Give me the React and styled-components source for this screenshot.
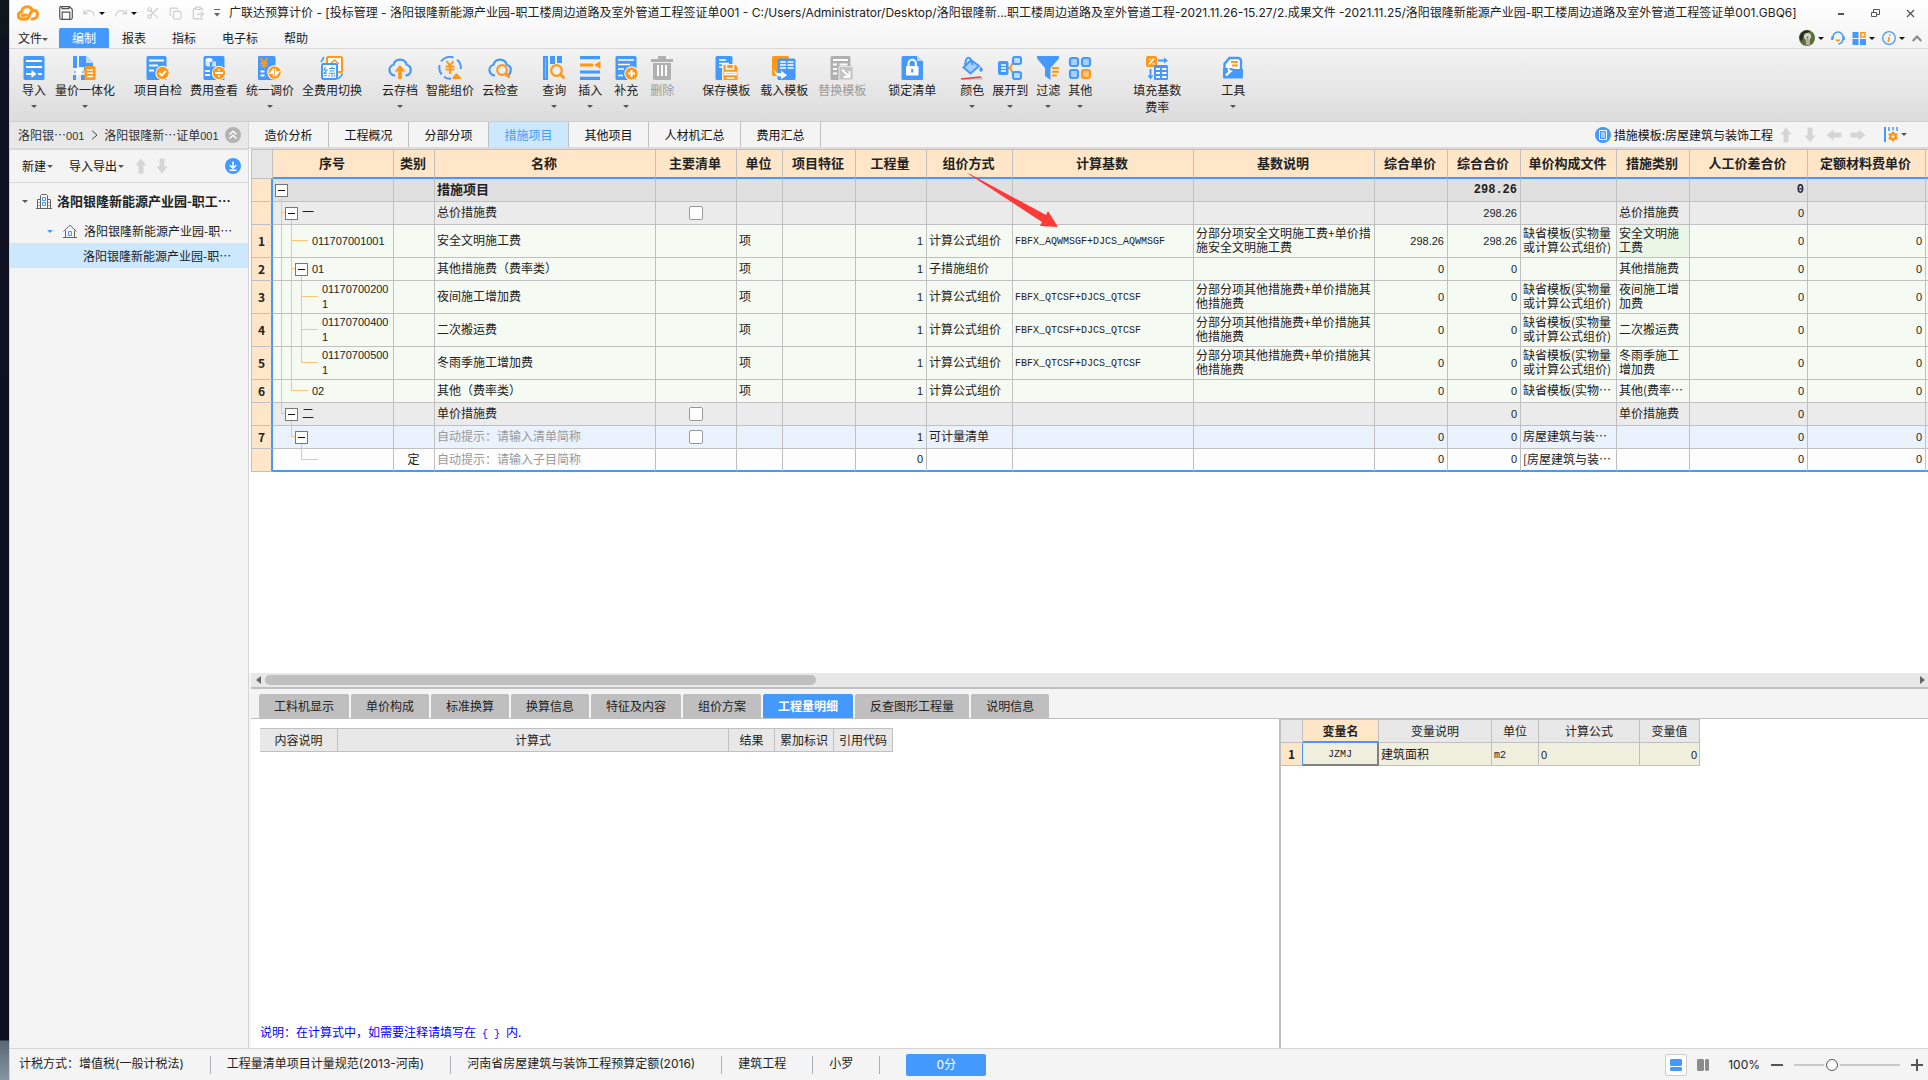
import React from 'react';
import styled, { createGlobalStyle } from 'styled-components'
import { Undo, Redo, Scissors, Copy, ClipboardPaste } from 'lucide-react'

const BLUE = '#4499ff';
const ORANGE = '#ff9718';
const LINE = '#c0c0c0';

const GlobalStyle = createGlobalStyle`
* {
    box-sizing: border-box;
}
body {
    margin: 0;
    background: #0d101c;
    color: #222;
    font-family: "Inter", "Noto Sans CJK SC", sans-serif;
    font-size: 12px;
    line-height: 16px;
}
button, input {
    font: inherit;
    color: inherit;
    margin: 0;
    padding: 0;
}
button {
    background: none;
    border: 0;
    white-space: nowrap;
}
svg {
    display: block;
    flex: none;
}
`

const Desktop = styled.div`
display: flex;
min-height: 100vh;
padding-left: 9px;
background: linear-gradient(#10181a, #0f1122 60px, #0e1020 1040px, #5a6672 1041px, #8795a4) left / 9px 100% no-repeat;
overflow: hidden;
`

const Window = styled.div`
flex: 1;
min-width: 0;
display: flex;
flex-direction: column;
background: #f4f4f4;
border-left: 1px solid #d5d5d5;
`

const Top = styled.header`
background: linear-gradient(#ffffff, #f3f3f3);
border-bottom: 1px solid #d8d8d8;
`

const TitleBar = styled.div`
display: flex;
align-items: center;
height: 28px;
padding: 0 0 2px 7px;
`

const Quick = styled.div`
display: flex;
align-items: center;
gap: 9px;
margin-left: 20px;
`

const IconButton = styled.button`
display: flex;
align-items: center;
gap: 3px;
color: ${props => props.$color || '#444'};
`

const Caret = styled.span`
display: block;
flex: none;
border: solid transparent;
border-width: 3px 3px 0;
border-top-color: ${props => props.$color || '#555'};
`

const Title = styled.div`
flex: 1;
min-width: 0;
overflow: hidden;
white-space: nowrap;
`

const WindowButton = styled.button`
display: flex;
align-items: center;
justify-content: center;
width: 35px;
height: 20px;
`

const MenuBar = styled.nav`
display: flex;
height: 20px;
`

const MenuItem = styled.button`
display: flex;
align-items: center;
padding: 2px ${props => props.$first ? '11px 0 8px' : '13px 0'};
border-radius: 2px 2px 0 0;
background: ${props => props.$active ? BLUE : 'none'};
color: ${props => props.$active ? 'white' : '#222'};
`

const Account = styled.div`
display: flex;
align-items: center;
gap: 7px;
margin-left: auto;
padding-right: 6px;
`

const Ribbon = styled.div`
display: flex;
height: 73px;
padding: 7px 0 0 12px;
background: linear-gradient(#f3f3f3, #dcdcdc);
border-bottom: 1px solid #cecece;
overflow: hidden;
`

const ToolGroup = styled.div`
display: flex;
align-items: flex-start;
gap: ${props => props.$gap}px;
margin-left: ${props => props.$lead}px;
`

const Tool = styled.button`
display: flex;
flex-direction: column;
align-items: center;
gap: 2px;
color: ${props => props.$off ? '#9a9a9a' : '#222'};
line-height: 17px;
white-space: pre;

${Caret} {
    margin-top: 4px;
}
`

const Body = styled.div`
flex: 1;
display: flex;
min-height: 0;
`

const Side = styled.aside`
flex: none;
width: 239px;
border-right: 1px solid #d5d5d5;
font-family: "Noto Sans CJK SC", sans-serif;
`

const Crumbs = styled.div`
display: flex;
align-items: center;
justify-content: space-between;
height: 28px;
padding: 0 7px 0 8px;
background: #e8e8e8;
border-bottom: 2px solid #d8d8d8;
`

const Crumb = styled.a`
color: #333;
text-decoration: none;
`

const SideTools = styled.div`
display: flex;
align-items: center;
height: 33px;
padding: 0 7px 0 12px;
gap: 5px;
border-bottom: 1px solid #d8d8d8;
`

const SideMenu = styled.button`
display: flex;
align-items: center;
gap: 1px;
margin-right: ${props => props.$space}px;
color: #111;
`

const Spacer = styled.div`
flex: 1;
`

const TreeItem = styled.button`
display: flex;
align-items: center;
width: 100%;
height: ${props => props.$height}px;
padding-left: ${props => props.$indent}px;
gap: ${props => props.$bold ? 8 : 10}px;
background: ${props => props.$active ? '#cce8ff' : 'none'};
font-size: ${props => props.$bold ? 13 : 12}px;
font-weight: ${props => props.$bold ? 700 : 400};
`

const TreeLabel = styled.span`
margin-left: -3px;
`

const Main = styled.main`
flex: 1;
min-width: 0;
display: flex;
flex-direction: column;
font-family: "Noto Sans CJK SC", sans-serif;
`

const PageTabs = styled.div`
display: flex;
height: 27px;
border-bottom: 2px solid #dcdcdc;
`

const PageTab = styled.button`
width: ${props => props.$wide ? 92 : 80}px;
border-right: 1px solid ${LINE};
background: ${props => props.$active ? '#cce8ff' : 'none'};
color: ${props => props.$active ? BLUE : '#111'};
`

const Template = styled.div`
display: flex;
align-items: center;
gap: 3px;
margin-left: auto;
padding-right: 21px;
color: #111;
`

const Arrows = styled.div`
display: flex;
gap: 8px;
padding: 0 15px 0 2px;
`

const GridPane = styled.section`
position: relative;
flex: 1;
padding-left: 2px;
background: white;
overflow: hidden;
`

const Sheet = styled.table`
table-layout: fixed;
width: 1677px;
border-collapse: separate;
border-spacing: 0;
border-top: 1px solid ${LINE};
border-left: 1px solid ${LINE};
line-height: 14px;
`

const HeadCell = styled.th`
height: 29px;
padding: 0 2px 2px 0;
background: ${props => props.$corner ? '#e6e6e6' : '#ffe6c8'};
border-right: 1px solid ${LINE};
border-bottom: ${props => props.$corner ? `1px solid ${LINE}` : `2px solid ${BLUE}`};
font-size: 13px;
font-weight: 700;
white-space: nowrap;
`

const RowHead = styled.th`
padding: 0;
background: #ffe6c8;
border-right: 2px solid ${BLUE};
border-bottom: 1px solid ${LINE};
font-weight: 700;
`

const tones = {
    total: '#e0e0e0',
    group: '#ebebeb',
    item: '#f5faf3',
    active: '#eaf2fd',
    blank: '#fdfdfd'
}

const Row = styled.tr`
height: ${props => props.$tall ? 33 : 23}px;
background: ${props => tones[props.$tone]};

&:last-child td {
    border-bottom: 2px solid ${BLUE};
}
`

const Cell = styled.td`
padding: 0 3px 2px 2px;
border-right: 1px solid ${LINE};
border-bottom: 1px solid ${LINE};
background: ${props => props.$marked ? '#ebf7e6' : 'none'};
color: ${props => props.$hint ? '#999' : '#222'};
text-align: ${props => props.$align || 'left'};
white-space: pre;
overflow: hidden;
`

const FlushCell = styled(Cell)`
padding: 0;
`

const Digits = styled.span`
font-family: "Liberation Sans", sans-serif;
font-size: 11px;
`

const Total = styled.span`
font-family: ${props => props.$num ? '"Liberation Mono", monospace' : 'inherit'};
font-size: ${props => props.$num ? 12 : 13}px;
font-weight: 700;
`

const Code = styled.span`
font-family: "Liberation Mono", monospace;
font-size: 10px;
`

const Branch = styled.div`
position: relative;
display: flex;
align-items: center;
height: ${props => props.$height}px;
padding-left: ${props => props.$indent}px;
gap: 4px;

svg {
    position: absolute;
    left: 0;
    top: 0;
}
`

const BranchLabel = styled.span`
padding-bottom: 2px;
`

const Toggle = styled.button`
position: relative;
display: flex;
align-items: center;
justify-content: center;
width: 13px;
height: 13px;
background: white;
border: 1px solid #777;

&::before {
    content: '';
    width: 7px;
    height: 1px;
    background: #111;
}
`

const Check = styled.input`
appearance: none;
display: block;
width: 14px;
height: 14px;
margin: 0 auto;
background: white;
border: 1px solid #999;
border-radius: 2px;
`

const Pointer = styled.svg`
position: absolute;
left: 718px;
top: 24px;
`

const ScrollBar = styled.div`
display: flex;
align-items: center;
justify-content: space-between;
height: 14px;
margin-left: 2px;
padding: 0 3px 0 5px;
background: #e8e8e8;
`

const Thumb = styled.div`
width: 33%;
height: 10px;
margin: 0 auto 0 4px;
border-radius: 5px;
background: #bfbfbf;
`

const Detail = styled.section`
flex: none;
display: flex;
flex-direction: column;
height: 361px;
margin-left: 2px;
border-top: 2px solid ${LINE};
`

const DetailTabs = styled.div`
display: flex;
gap: 2px;
padding: 5px 0 0 8px;
border-bottom: 1px solid ${LINE};
`

const DetailTab = styled.button`
height: 24px;
padding: 0 15px;
border-radius: 2px 2px 0 0;
background: ${props => props.$active ? BLUE : '#bfbfbf'};
color: ${props => props.$active ? 'white' : '#222'};
font-weight: ${props => props.$active ? 700 : 400};
`

const Split = styled.div`
flex: 1;
display: grid;
grid-template-columns: 1028fr 649fr;
background: white;
`

const Formula = styled.div`
display: flex;
flex-direction: column;
justify-content: space-between;
padding: 9px 0 5px 9px;
`

const SmallTable = styled.table`
table-layout: fixed;
width: ${props => props.$width}px;
border-collapse: separate;
border-spacing: 0;
border-top: 1px solid ${LINE};

th, td {
    height: 23px;
    padding: 0 2px;
    border-right: 1px solid ${LINE};
    border-bottom: 1px solid ${LINE};
    font-weight: 400;
    white-space: nowrap;
}
th {
    background: #e8e8e8;
}
td {
    background: #f0eedd;
}
`

const VarHead = styled.th`
&& {
    background: #ffe6c8;
    border-bottom: ${props => props.$row ? `1px solid ${LINE}` : `2px solid ${BLUE}`};
    border-right-color: ${props => props.$row ? BLUE : LINE};
    font-weight: 700;
}
`

const VarCell = styled.td`
text-align: ${props => props.$align || 'left'};

&& {
    border-color: ${props => props.$focus ? '#808080' : LINE};
    border-width: ${props => props.$focus ? '0 2px 2px 0' : '0 1px 1px 0'};
}
`

const Note = styled.div`
color: #0000ff;
white-space: pre;
`

const Variables = styled.div`
border-left: 2px solid ${LINE};
`

const Status = styled.footer`
display: flex;
align-items: center;
height: 32px;
border-top: 1px solid #d5d5d5;
padding-right: 5px;
white-space: nowrap;
`

const StatusItem = styled.div`
height: 18px;
padding: 0 26px 0 16px;
border-right: 1px solid #a8b0b8;

&:first-child {
    padding-left: 9px;
}
`

const Score = styled.button`
width: 80px;
height: 22px;
margin-left: 26px;
border-radius: 2px;
background: ${BLUE};
color: white;
`

const View = styled.div`
display: flex;
align-items: center;
gap: 11px;
margin-left: auto;
`

const Layouts = styled.div`
display: flex;
gap: 5px;
padding-right: 3px;
`

const ViewButton = styled.button`
display: flex;
align-items: center;
justify-content: center;
width: 22px;
height: 22px;
border: 1px solid ${props => props.$active ? '#ccc' : 'transparent'};
border-radius: 2px;
background: ${props => props.$active ? 'white' : 'none'};
`

const Zoom = styled.input`
appearance: none;
width: 106px;
height: 14px;
background: linear-gradient(#c8c8c8, #c8c8c8) center / 100% 2px no-repeat;

&::-webkit-slider-thumb {
    appearance: none;
    width: 12px;
    height: 12px;
    border: 1px solid #555;
    border-radius: 50%;
    background: white;
    box-shadow: 0 0 0 2px #f4f4f4;
}
`

// 24px ribbon pictures
const sheetPath = 'M3 0h18a1.500 1.500 0 0 1 1.500 1.500v21A1.500 1.500 0 0 1 21 24H3a1.500 1.500 0 0 1-1.500-1.500v-21A1.500 1.500 0 0 1 3 0z'
const halfSheet = 'M2 0h17a1.500 1.500 0 0 1 1.500 1.500V24H2a1.500 1.500 0 0 1-1.500-1.500v-21A1.500 1.500 0 0 1 2 0z'
const cloudPath = 'M7 19.500a5.500 5.500 0 0 1-1.500-10.800 6.800 6.800 0 0 1 13.200 0A5.500 5.500 0 0 1 17.500 19.500'

const pictures = {
    import: <>
        <path d={sheetPath} fill={BLUE} />
        <path d="M4 5h16M4 11h16M4 18h7M16 18h4" stroke="#fff" strokeWidth="1.800" />
        <path d="M9.500 14l5 4-5 4z" fill="#fff" />
    </>,
    unify: <>
        <path d="M0 0h4v12H0zM6 0h7l7 7v4h-4v4h-5v-4H6zM0 19h3v5H0zM8 19h4v5H8z" fill={BLUE} />
        <path d="M13 0l7 7h-7z" fill="#b9dbff" />
        <path d="M1 16h10" stroke="#8ec2ff" strokeWidth="2" />
        <rect x="3" y="12.500" width="6" height="6" fill="#fff" />
        <rect x="11.500" y="10" width="11" height="14" rx="1.500" fill={ORANGE} />
        <path d="M14 14h6M14 17.200h6M14 20.400h6" stroke="#fff" strokeWidth="1.500" />
    </>,
    check: <>
        <path d={halfSheet} fill={BLUE} />
        <path d="M3 4.500h15M3 9.500h9M3 14.500h5" stroke="#fff" strokeWidth="1.800" />
        <circle cx="16.500" cy="17" r="7.200" fill="#fff" />
        <circle cx="16.500" cy="17" r="6.200" fill={ORANGE} />
        <path d="M13.300 17l2.500 2.400 4-4.400" stroke="#fff" strokeWidth="2" fill="none" />
    </>,
    cost: <>
        <path d={sheetPath} fill={BLUE} />
        <ellipse cx="7" cy="4" rx="3.500" ry="2" fill="#fff" />
        <path d="M3.500 5v4c1 2 6 2 7 0V5M8 5.500h6v5H8z" fill="#d5e9ff" />
        <path d="M3 15h5M3 19h5" stroke="#fff" strokeWidth="1.800" />
        <circle cx="17" cy="17" r="7.200" fill="#fff" />
        <circle cx="17" cy="17" r="6.200" fill={ORANGE} />
        <path d="M13 17h8M17 13v1.800M17 19.200V21" stroke="#fff" strokeWidth="1.800" />
    </>,
    adjust: <>
        <path d="M1 0h15a1.500 1.500 0 0 1 1.500 1.500V24H1a1 1 0 0 1-1-1V1a1 1 0 0 1 1-1z" fill={BLUE} />
        <path d="M2.500 2l3.500 4.500L9.500 2M2.500 7h7M2.500 9.500h7M6 6.500V12" stroke={ORANGE} strokeWidth="1.800" fill="none" />
        <path d="M2.500 15.500h4M2.500 19.500h4" stroke="#fff" strokeWidth="1.800" />
        <circle cx="16.500" cy="16.500" r="7.300" fill="#fff" />
        <circle cx="16.500" cy="16.500" r="6.300" fill={ORANGE} />
        <path d="M15.500 12.500v8M17.500 20.500v-8M15.500 13l-3.200 4h3.200M17.500 20l3.200-4h-3.200" stroke="#fff" strokeWidth="1.300" fill="#fff" />
    </>,
    swap: <>
        <rect x="7" y="1" width="15" height="15" rx="1.500" fill="#fff" stroke={ORANGE} strokeWidth="2" />
        <path d="M10 8l4.500-4L19 8M11 9h7M11 12h7M14.500 8v6" stroke={ORANGE} strokeWidth="1.500" fill="none" />
        <path d="M1 6l3-5M18 23l4-4v-2" stroke={BLUE} strokeWidth="1.500" fill="none" />
        <rect x="2" y="8" width="15" height="15" rx="1.500" fill="#fff" stroke={BLUE} strokeWidth="2" />
        <path d="M5.500 11l-1.500 3h3l-3 3.500 3-.5M4 20l3-1M9 12.500h6M9.500 15h5M8.500 17.300h6.500M12 10.500v2M12 17.500v3.500M9.500 19l-1 1.500M14 19l1 1.500" stroke={BLUE} strokeWidth="1.100" fill="none" />
    </>,
    cloudUp: <>
        <path d={cloudPath} stroke={BLUE} strokeWidth="2.200" fill="none" />
        <path d="M12 9l5.500 6.500h-3.700V23h-3.600v-7.500H6.500z" fill={ORANGE} />
    </>,
    smart: <>
        <path d="M15.500 1.600A10.500 10.500 0 0 0 3 5.500M1.700 9a10.500 10.500 0 0 0 2 9.500M6 20.700a10.500 10.500 0 0 0 7 2M19 3.800a10.500 10.500 0 0 1 3.800 9" stroke={BLUE} strokeWidth="2" fill="none" />
        <path d="M8.500 5l3.500 4.500L15.500 5M7.500 10.500h9M7.500 13.500h9M12 9.500V18" stroke={ORANGE} strokeWidth="2" fill="none" />
        <path d="M14.500 23c0-3 2-3 3.500-6 2 1 2.500 2 3.500 3s1.500 1.500 1.500 3z" fill={ORANGE} />
    </>,
    cloudFind: <>
        <path d={cloudPath} stroke={BLUE} strokeWidth="2.200" fill="none" />
        <circle cx="14" cy="14" r="4.800" stroke={ORANGE} strokeWidth="2.200" fill="#f0f0f0" />
        <path d="M17.500 17.500l4 4" stroke={ORANGE} strokeWidth="2.800" />
    </>,
    query: <>
        <path d="M1 0h5v24H1zM8 0h5v8H8zM15 0h5v7h-5z" fill={BLUE} />
        <path d="M3.500 2v20" stroke="#8ec2ff" strokeWidth="1" />
        <circle cx="14.500" cy="14.500" r="5.300" stroke={ORANGE} strokeWidth="2.200" fill="#f0f0f0" />
        <path d="M18.500 18.500l4 4" stroke={ORANGE} strokeWidth="2.800" />
    </>,
    insert: <>
        <path d="M2 1.700h20M2 16h20M2 22.300h20" stroke={BLUE} strokeWidth="3.200" />
        <path d="M2 9h13" stroke={ORANGE} strokeWidth="3" />
        <path d="M22.500 5v8l-6.500-4z" fill={ORANGE} />
    </>,
    append: <>
        <path d={sheetPath} fill={BLUE} />
        <path d="M4 4h16M4 8.500h12M4 13h6M4 19.500h5" stroke="#fff" strokeWidth="1.500" />
        <circle cx="17.500" cy="17.500" r="7.200" fill="#fff" />
        <circle cx="17.500" cy="17.500" r="6.200" fill={ORANGE} />
        <path d="M17.500 14v7M14 17.500h7" stroke="#fff" strokeWidth="2" />
    </>,
    trash: <>
        <path d="M1 3h22v3H1zM8 0h8v3H8zM3 7h18v15.500a1.500 1.500 0 0 1-1.500 1.500h-15A1.500 1.500 0 0 1 3 22.500z" fill="#b0b0b0" />
        <path d="M8 9v11M12 9v11M16 9v11" stroke="#fff" strokeWidth="2" />
    </>,
    saveTpl: <>
        <path d="M3 0h14a1.500 1.500 0 0 1 1.500 1.500V24H3a1.500 1.500 0 0 1-1.500-1.500v-21A1.500 1.500 0 0 1 3 0z" fill={BLUE} />
        <path d="M5 4h7M5 7.500h10M5 11h4" stroke="#fff" strokeWidth="1.500" />
        <path d="M8 8h16v16H8z" fill="#f0f0f0" />
        <path d="M9.500 9h12l2 2v13h-14z" fill={ORANGE} />
        <path d="M12.500 9v4h7V9M11 16.500h11v2H11zM12.500 22h8" stroke="#fff" strokeWidth="1.500" fill="none" />
    </>,
    loadTpl: <>
        <rect x="0" y="0" width="17" height="20" rx="1.500" fill={ORANGE} />
        <rect x="5.500" y="2.500" width="18" height="21.500" rx="1.500" fill={BLUE} />
        <path d="M8 6h6M8 9h6M8 12h6M15.500 6h6M15.500 9h6M15.500 12h6" stroke="#fff" strokeWidth="1.700" />
        <path d="M2 13c1 4 4 4.500 7 4.300v-2.800l6 4.700-6 4v-2.700C5 20.500 2 18 2 13z" fill="#fff" />
    </>,
    replaceTpl: <>
        <path d={halfSheet} fill="#b0b0b0" />
        <path d="M3 4h15M3 8.500h4M9.500 8.500h8M3 13h4M3 17.500h4" stroke="#fff" strokeWidth="1.800" />
        <path d="M9 10.500h14V24H9z" fill="#c4c4c4" stroke="#e8e8e8" />
        <path d="M12 13.500l7 7M19.500 15v6h-6" stroke="#fff" strokeWidth="1.800" fill="none" />
    </>,
    lock: <>
        <path d="M3 0h14l6 5v17.500a1.500 1.500 0 0 1-1.500 1.500H3a1.500 1.500 0 0 1-1.500-1.500v-21A1.500 1.500 0 0 1 3 0z" fill={BLUE} />
        <path d="M17 0l6 5h-6z" fill="#b9dbff" />
        <rect x="6" y="10" width="12.500" height="9.500" rx="1" fill="#fff" />
        <path d="M8.500 10V7.500a3.700 3.700 0 0 1 7.400 0V10" stroke="#fff" strokeWidth="2" fill="none" />
        <path d="M12.200 13v3.500" stroke={BLUE} strokeWidth="2" />
    </>,
    color: <>
        <path d="M11 4l8 6-8.500 7.500-7-6z" fill="#a5d0ff" stroke={BLUE} strokeWidth="2" />
        <path d="M5 9l1-5c1-3 4-3 5 0l1.500 5" stroke={BLUE} strokeWidth="2" fill="none" />
        <path d="M21 11c1.500 2.500 2 3.500 0 4.500-2-1-1.500-2 0-4.500z" stroke={BLUE} fill={BLUE} />
        <path d="M8 23h14v-2" stroke="#c4c8cc" strokeWidth="1.500" fill="none" />
        <path d="M1 23l20-2" stroke="#f03a3a" strokeWidth="1.500" />
    </>,
    expand: <>
        <path d="M9 12h3l4-7M12 12l4 7" stroke={ORANGE} strokeWidth="2" fill="none" />
        <rect x="0" y="5" width="10.500" height="14" rx="2" fill={BLUE} />
        <path d="M3 9h5M3 12h5M3 15h5" stroke="#fff" strokeWidth="1.500" />
        <rect x="15" y="1" width="8" height="7" rx="2" fill="#b9dbff" stroke={BLUE} strokeWidth="2.200" />
        <rect x="15" y="16" width="8" height="7" rx="2" fill="#b9dbff" stroke={BLUE} strokeWidth="2.200" />
    </>,
    filter: <>
        <path d="M1 0h22v2.500L14.500 12v12L9 20v-8L1 2.500z" fill={BLUE} />
        <path d="M16 12h7M16 15.700h7M16 19.500h5" stroke={ORANGE} strokeWidth="2" />
    </>,
    more: <>
        <rect x="2" y="2" width="8" height="8" rx="2" fill="#a5d0ff" stroke={BLUE} strokeWidth="2.200" />
        <rect x="14" y="2" width="8" height="8" rx="2" fill="#a5d0ff" stroke={BLUE} strokeWidth="2.200" />
        <rect x="2" y="14" width="8" height="8" rx="2" fill="#a5d0ff" stroke={BLUE} strokeWidth="2.200" />
        <rect x="14" y="14" width="8" height="8" rx="2" fill="#ffc477" stroke={ORANGE} strokeWidth="2.200" />
    </>,
    rate: <>
        <rect x="1" y="0" width="11" height="11" rx="2" fill={ORANGE} />
        <path d="M4 8.500l5-6M3.700 3.500h2M7.500 7.800h2" stroke="#fff" strokeWidth="1.700" />
        <path d="M13 4.500h8M5.500 13v8" stroke={BLUE} strokeWidth="1.800" />
        <path d="M19 1.500l4 3-4 3zM2.500 19.500l3 4 3-4z" fill={BLUE} />
        <rect x="9" y="9" width="14" height="15" rx="1.500" fill={BLUE} />
        <path d="M11 13h4M17 13h4.500M11 17h4M17 17h4.500M11 21h4M17 21h4.500" stroke="#fff" strokeWidth="2" />
    </>,
    tools: <>
        <path d="M3.500 20V8l5-6H17a3 3 0 0 1 3 3v10" fill="#fff" stroke={BLUE} strokeWidth="2.400" />
        <path d="M10 6h7M11 9.500h6" stroke={ORANGE} strokeWidth="1.800" />
        <path d="M2 12h8l4 1h8v8a1.500 1.500 0 0 1-1.500 1.500h-17A1.500 1.500 0 0 1 2 21z" fill={BLUE} />
        <path d="M5 19.500l5-5" stroke="#fff" strokeWidth="2.400" />
        <path d="M8.500 11v3.500l3.500.5a3.300 3.300 0 0 1-5 0c-1-1.500 0-3.500 1.500-4z" fill="#fff" />
    </>
}

const groups = [
    { lead: 0, gap: 9, tools: [['导入', 'import', 1], ['量价一体化', 'unify', 1]] },
    { lead: 19, gap: 8, tools: [['项目自检', 'check'], ['费用查看', 'cost'], ['统一调价', 'adjust', 1], ['全费用切换', 'swap']] },
    { lead: 20, gap: 8, tools: [['云存档', 'cloudUp', 1], ['智能组价', 'smart'], ['云检查', 'cloudFind']] },
    { lead: 24, gap: 12, tools: [['查询', 'query', 1], ['插入', 'insert', 1], ['补充', 'append', 1], ['删除', 'trash', 0, 1]] },
    { lead: 28, gap: 10, tools: [['保存模板', 'saveTpl'], ['载入模板', 'loadTpl'], ['替换模板', 'replaceTpl', 0, 1]] },
    { lead: 22, gap: 0, tools: [['锁定清单', 'lock']] },
    { lead: 24, gap: 8, tools: [['颜色', 'color', 1], ['展开到', 'expand', 1], ['过滤', 'filter', 1], ['其他', 'more', 1]] },
    { lead: 41, gap: 0, tools: [['填充基数\n费率', 'rate']] },
    { lead: 40, gap: 0, tools: [['工具', 'tools', 1]] }
]

const columns = [
    ['序号', 121], ['类别', 41], ['名称', 221], ['主要清单', 81], ['单位', 46], ['项目特征', 73],
    ['工程量', 71], ['组价方式', 86], ['计算基数', 181], ['基数说明', 181], ['综合单价', 73], ['综合合价', 73],
    ['单价构成文件', 96], ['措施类别', 73], ['人工价差合价', 118], ['定额材料费单价', 118], ['', 3]
]

const OTHER_CODE = 'FBFX_QTCSF+DJCS_QTCSF'
const OTHER_NOTE = '分部分项其他措施费+单价措施其\n他措施费'
const FILE = '缺省模板(实物量\n或计算公式组价)'

// guides: one letter per ancestor line, F runs through the row, H stops halfway
const rows = [
    { tone: 'total', level: 0, box: true, open: true, guides: '', name: '措施项目', sum: '298.26', labor: '0' },
    { tone: 'group', level: 1, box: true, open: true, guides: 'F', code: '一', name: '总价措施费', check: true, sum: '298.26', kind: '总价措施费', labor: '0' },
    { no: 1, tone: 'item', tall: true, level: 2, guides: 'FF', code: '011707001001', name: '安全文明施工费', unit: '项', qty: '1', mode: '计算公式组价', base: 'FBFX_AQWMSGF+DJCS_AQWMSGF', note: '分部分项安全文明施工费+单价措\n施安全文明施工费', price: '298.26', sum: '298.26', file: FILE, kind: '安全文明施\n工费', marked: true, labor: '0', quota: '0' },
    { no: 2, tone: 'item', level: 2, box: true, open: true, guides: 'FF', code: '01', name: '其他措施费（费率类）', unit: '项', qty: '1', mode: '子措施组价', price: '0', sum: '0', kind: '其他措施费', labor: '0', quota: '0' },
    { no: 3, tone: 'item', tall: true, level: 3, guides: 'FFF', code: '01170700200\n1', name: '夜间施工增加费', unit: '项', qty: '1', mode: '计算公式组价', base: OTHER_CODE, note: OTHER_NOTE, price: '0', sum: '0', file: FILE, kind: '夜间施工增\n加费', labor: '0', quota: '0' },
    { no: 4, tone: 'item', tall: true, level: 3, guides: 'FFF', code: '01170700400\n1', name: '二次搬运费', unit: '项', qty: '1', mode: '计算公式组价', base: OTHER_CODE, note: OTHER_NOTE, price: '0', sum: '0', file: FILE, kind: '二次搬运费', labor: '0', quota: '0' },
    { no: 5, tone: 'item', tall: true, level: 3, guides: 'FFH', code: '01170700500\n1', name: '冬雨季施工增加费', unit: '项', qty: '1', mode: '计算公式组价', base: OTHER_CODE, note: OTHER_NOTE, price: '0', sum: '0', file: FILE, kind: '冬雨季施工\n增加费', labor: '0', quota: '0' },
    { no: 6, tone: 'item', level: 2, guides: 'FH', code: '02', name: '其他（费率类）', unit: '项', qty: '1', mode: '计算公式组价', price: '0', sum: '0', file: '缺省模板(实物…', kind: '其他(费率…', labor: '0', quota: '0' },
    { tone: 'group', level: 1, box: true, open: true, guides: 'H', code: '二', name: '单价措施费', check: true, sum: '0', kind: '单价措施费', labor: '0' },
    { no: 7, tone: 'active', level: 2, box: true, open: true, guides: '-H', name: '自动提示：请输入清单简称', hint: true, check: true, qty: '1', mode: '可计量清单', price: '0', sum: '0', file: '房屋建筑与装…', labor: '0', quota: '0' },
    { tone: 'blank', level: 3, guides: '--H', type: '定', name: '自动提示：请输入子目简称', hint: true, qty: '0', price: '0', sum: '0', file: '[房屋建筑与装…', labor: '0', quota: '0' }
]

const Logo = () => (
    <svg width="22" height="16" viewBox="0 0 22 16" fill="none" stroke="#ff9a1a" strokeWidth="3" strokeLinecap="round" strokeLinejoin="round">
        <path d="M8.500 14H5a3.500 3.500 0 0 1-.5-7c0-3 2.500-5.200 5.500-5.200 2.500 0 4.500 1.200 5.300 3.400" />
        <path d="M5 10.500l4-.5M8.500 14c3 0 3.300-2 4.300-4.500 1-2.600 2.200-4.200 4.500-4.200a3.500 3.500 0 0 1 3.200 3.700c0 3-2.300 5-5.500 5" />
    </svg>
)

const Arrow = ({ turn = 0 }) => (
    <svg width="16" height="16" viewBox="0 0 16 16">
        <path d="M8 .5l5.500 7h-3v8h-5v-8h-3z" fill="#d5d5d5" transform={`rotate(${turn} 8 8)`} />
    </svg>
)

const SaveIcon = () => (
    <svg width="14" height="14" viewBox="0 0 14 14" fill="none" stroke="#555" strokeWidth="1.200">
        <path d="M1.500 .7h9l2.800 2.800v8.300a1.500 1.500 0 0 1-1.500 1.500H2.200A1.500 1.500 0 0 1 .7 11.800V1.500zM3 .7v2h7v-2M3.200 13.300V6.200h7.600v7.100" />
    </svg>
)

const TreeLines = ({ row, height }) => {
    const mid = Math.ceil(height / 2) - .5
    const from = row.level * 10 - 2
    return (
        <svg width="60" height={height} stroke="#ffc477" strokeWidth="1" fill="none">
            {row.guides.split('').map((g, i) => g !== '-' && (
                <path key={i} d={`M${i * 10 + 8.5} 0V${g === 'F' ? height : mid}`} />
            ))}
            {row.level > 0 && <path d={`M${from} ${mid}H${from + (row.box ? 6 : 17)}`} />}
            {row.open && <path d={`M${row.level * 10 + 8.5} ${mid}V${height}`} />}
        </svg>
    )
}

const SheetRow = ({ row }) => {
    const num = value => value && (row.tone === 'total' ? <Total $num>{value}</Total> : <Digits>{value}</Digits>)
    const isDigits = /^\d/.test(row.code || '')
    // the last row gives one more pixel to its blue border
    const height = row.tall ? 32 : row.tone === 'blank' ? 21 : 22
    return (
        <Row $tone={row.tone} $tall={row.tall}>
            <RowHead scope="row">{row.no}</RowHead>
            <FlushCell>
                <Branch $height={height} $indent={row.level * 10 + (row.box ? 2 : 19)}>
                    <TreeLines row={row} height={height} />
                    {row.box && <Toggle aria-label="折叠" />}
                    <BranchLabel>{isDigits ? <Digits>{row.code}</Digits> : row.code}</BranchLabel>
                </Branch>
            </FlushCell>
            <Cell $align="center">{row.type}</Cell>
            <Cell $hint={row.hint}>{row.tone === 'total' ? <Total>{row.name}</Total> : row.name}</Cell>
            <FlushCell>{row.check && <Check type="checkbox" aria-label={`主要清单 ${row.name}`} />}</FlushCell>
            <Cell>{row.unit}</Cell>
            <Cell />
            <Cell $align="right">{num(row.qty)}</Cell>
            <Cell>{row.mode}</Cell>
            <Cell>{row.base && <Code>{row.base}</Code>}</Cell>
            <Cell>{row.note}</Cell>
            <Cell $align="right">{num(row.price)}</Cell>
            <Cell $align="right">{num(row.sum)}</Cell>
            <Cell>{row.file}</Cell>
            <Cell $marked={row.marked}>{row.kind}</Cell>
            <Cell $align="right">{num(row.labor)}</Cell>
            <Cell $align="right">{num(row.quota)}</Cell>
            <Cell />
        </Row>
    )
}

const Header = () => (
    <Top>
        <TitleBar>
            <Logo />
            <Quick>
                <IconButton aria-label="保存"><SaveIcon /></IconButton>
                <IconButton aria-label="撤销" $color="#ccc"><Undo size={14} /><Caret $color="#111" /></IconButton>
                <IconButton aria-label="恢复" $color="#ccc"><Redo size={14} /><Caret $color="#111" /></IconButton>
                <IconButton aria-label="剪切" $color="#ccc"><Scissors size={14} /></IconButton>
                <IconButton aria-label="复制" $color="#ccc"><Copy size={13} /></IconButton>
                <IconButton aria-label="粘贴" $color="#ccc"><ClipboardPaste size={14} /></IconButton>
                <IconButton aria-label="自定义">
                    <svg width="6" height="8" viewBox="0 0 6 8"><path d="M0 .5h6" stroke="#666" /><path d="M0 4h6L3 7.500z" fill="#666" /></svg>
                </IconButton>
                <Title>广联达预算计价 - [投标管理 - 洛阳银隆新能源产业园-职工楼周边道路及室外管道工程签证单001 - C:/Users/Administrator/Desktop/洛阳银隆新...职工楼周边道路及室外管道工程-2021.11.26-15.27/2.成果文件 -2021.11.25/洛阳银隆新能源产业园-职工楼周边道路及室外管道工程签证单001.GBQ6]</Title>
            </Quick>
            <Spacer />
            <WindowButton aria-label="最小化"><svg width="6" height="6"><path d="M0 4h6" stroke="#555" strokeWidth="2" /></svg></WindowButton>
            <WindowButton aria-label="还原">
                <svg width="9" height="9" fill="none" stroke="#555"><path d="M.5 3.500h5v4h-5zM2.500 3V.5h6v5H6" /></svg>
            </WindowButton>
            <WindowButton aria-label="关闭"><svg width="9" height="9"><path d="M1 1l7 7M8 1L1 8" stroke="#555" strokeWidth="1.300" /></svg></WindowButton>
        </TitleBar>
        <MenuBar>
            <MenuItem $first>文件<Caret /></MenuItem>
            <MenuItem $active>编制</MenuItem>
            <MenuItem>报表</MenuItem>
            <MenuItem>指标</MenuItem>
            <MenuItem>电子标</MenuItem>
            <MenuItem>帮助</MenuItem>
            <Account>
                <IconButton aria-label="账户">
                    <svg width="16" height="16" viewBox="0 0 16 16">
                        <circle cx="8" cy="8" r="8" fill="#56703a" />
                        <path d="M1 5C3 1 8-1 11 1L5 5l-2 6C1 11 0 8 1 5z" fill="#26301d" />
                        <ellipse cx="8.500" cy="6.500" rx="3.600" ry="3.400" fill="#d8cfc8" />
                        <path d="M6.500 9h4.500v6H7z" fill="#b9aaa2" />
                        <circle cx="8.500" cy="7.500" r="1" fill="#6e5a55" />
                    </svg>
                    <Caret $color="#111" />
                </IconButton>
                <IconButton aria-label="客服">
                    <svg width="14" height="14" viewBox="0 0 14 14" fill="none" stroke={BLUE} strokeWidth="1.500">
                        <path d="M2 8V6a5 5 0 0 1 10 0v2c0 3-2 4.500-4.500 5" />
                        <path d="M1.200 5.500v3.500M12.800 5.500v3.500" strokeWidth="2" />
                        <path d="M5 8.500c1 1.500 3 1.500 4 0" stroke={ORANGE} />
                    </svg>
                </IconButton>
                <IconButton aria-label="应用">
                    <svg width="14" height="14" viewBox="0 0 14 14">
                        <path d="M.5 1h6v6h-6zM.5 8h6v6h-6zM8 8h6v6H8z" fill={BLUE} />
                        <path d="M8.700 1.700h4.300v4.300H8.700z" fill="none" stroke={ORANGE} strokeWidth="1.500" />
                    </svg>
                    <Caret $color="#111" />
                </IconButton>
                <IconButton aria-label="信息">
                    <svg width="14" height="14" viewBox="0 0 14 14">
                        <circle cx="7" cy="7" r="6.300" fill="none" stroke={BLUE} strokeWidth="1.300" />
                        <path d="M7.700 3.200v1.500M7.300 6l-1 5" stroke={ORANGE} strokeWidth="1.700" />
                    </svg>
                    <Caret $color="#111" />
                </IconButton>
                <IconButton aria-label="收起">
                    <svg width="10" height="7"><path d="M.7 6L5 1.500 9.300 6" fill="none" stroke="#888" strokeWidth="2" /></svg>
                </IconButton>
            </Account>
        </MenuBar>
    </Top>
)

const Toolbar = () => (
    <Ribbon>
        {groups.map((group, i) => (
            <ToolGroup key={i} $lead={group.lead} $gap={group.gap}>
                {group.tools.map(([label, icon, menu, off]) => (
                    <Tool key={label} $off={off} disabled={!!off}>
                        <svg width="24" height="24" viewBox="0 0 24 24">{pictures[icon]}</svg>
                        {label}
                        {menu ? <Caret /> : null}
                    </Tool>
                ))}
            </ToolGroup>
        ))}
    </Ribbon>
)

const SidePanel = () => (
    <Side>
        <Crumbs>
            <Crumb href="#">洛阳银…<Digits>001</Digits></Crumb>
            <svg width="7" height="10"><path d="M1 .7L6 5 1 9.300" fill="none" stroke="#444" /></svg>
            <Crumb href="#">洛阳银隆新…证单<Digits>001</Digits></Crumb>
            <IconButton aria-label="收起">
                <svg width="16" height="16" viewBox="0 0 16 16" fill="none" stroke="#fff" strokeWidth="1.500">
                    <circle cx="8" cy="8" r="8" fill="#b3b3b3" stroke="none" />
                    <path d="M4.500 7.500L8 4.300l3.500 3.200M4.500 11.500L8 8.300l3.500 3.200" />
                </svg>
            </IconButton>
        </Crumbs>
        <SideTools>
            <SideMenu $space={11}>新建<Caret /></SideMenu>
            <SideMenu $space={4}>导入导出<Caret /></SideMenu>
            <IconButton aria-label="上移"><Arrow /></IconButton>
            <IconButton aria-label="下移"><Arrow turn={180} /></IconButton>
            <Spacer />
            <IconButton aria-label="下载">
                <svg width="16" height="16" viewBox="0 0 16 16" fill="none" stroke="#fff" strokeWidth="1.500">
                    <circle cx="8" cy="8" r="8" fill={BLUE} stroke="none" />
                    <path d="M8 3.500V10M4.800 7.200L8 10.300l3.200-3.100M4.500 12.300h7" />
                </svg>
            </IconButton>
        </SideTools>
        <TreeItem $height={36} $indent={12} $bold>
            <Caret />
            <svg width="16" height="16" viewBox="0 0 16 16" fill="none" stroke="#666">
                <path d="M0 15.500h16M1.500 15V6.500h3M4.500 15V2.500l1-1h5l1 1V15M11.500 6.500h3V15M2.500 9.500h1M2.500 12.500h1M12.500 9.500h1M12.500 12.500h1" />
                <path d="M6.500 4.500h3v3h-3zM6.500 9.500h3v3h-3z" stroke={BLUE} />
            </svg>
            <TreeLabel>洛阳银隆新能源产业园-职工…</TreeLabel>
        </TreeItem>
        <TreeItem $height={24} $indent={37}>
            <Caret $color={BLUE} />
            <svg width="14" height="14" viewBox="0 0 14 14" fill="none" stroke="#666">
                <path d="M.5 7.500L7 1.200l6.500 6.300M2.500 6.500v7h9v-7M0 13.500h14" />
                <path d="M5.500 7.500h3v4h-3z" stroke={BLUE} />
            </svg>
            <TreeLabel>洛阳银隆新能源产业园-职…</TreeLabel>
        </TreeItem>
        <TreeItem $height={25} $indent={76} $active>
            <TreeLabel>洛阳银隆新能源产业园-职…</TreeLabel>
        </TreeItem>
    </Side>
)

const detailTabs = ['工料机显示', '单价构成', '标准换算', '换算信息', '特征及内容', '组价方案', '工程量明细', '反查图形工程量', '说明信息']

const App = () => {
    return (
        <Desktop lang="zh-CN">
            <GlobalStyle />
            <Window>
                <Header />
                <Toolbar />
                <Body>
                    <SidePanel />
                    <Main>
                        <PageTabs>
                            <PageTab>造价分析</PageTab>
                            <PageTab>工程概况</PageTab>
                            <PageTab>分部分项</PageTab>
                            <PageTab $active>措施项目</PageTab>
                            <PageTab>其他项目</PageTab>
                            <PageTab $wide>人材机汇总</PageTab>
                            <PageTab>费用汇总</PageTab>
                            <Template>
                                <svg width="16" height="16" viewBox="0 0 16 16">
                                    <circle cx="8" cy="8" r="8" fill={BLUE} />
                                    <path d="M4.500 3.500h7v9h-7zM6 6h4M6 8h4M6 10h4" fill="none" stroke="#fff" />
                                </svg>
                                措施模板:房屋建筑与装饰工程
                                <Arrows>
                                    <Arrow /><Arrow turn={180} /><Arrow turn={270} /><Arrow turn={90} />
                                </Arrows>
                                <IconButton aria-label="列设置">
                                    <svg width="14" height="16" viewBox="0 0 14 16">
                                        <path d="M1 0v15" stroke={BLUE} strokeWidth="2" />
                                        <path d="M5 0v4M9 0v3M13 0v4" stroke={BLUE} strokeWidth="1.500" />
                                        <circle cx="9" cy="9.500" r="4" fill={ORANGE} />
                                        <path d="M9 4.500v10M4.700 7l8.600 5M13.300 7l-8.600 5" stroke={ORANGE} strokeWidth="2" />
                                        <circle cx="9" cy="9.500" r="1.300" fill="#fff" />
                                    </svg>
                                    <Caret />
                                </IconButton>
                            </Template>
                        </PageTabs>
                        <GridPane>
                            <Sheet>
                                <colgroup>
                                    <col width="21" />
                                    {columns.map(([name, width]) => <col key={name} width={width} />)}
                                </colgroup>
                                <thead>
                                    <tr>
                                        <HeadCell $corner />
                                        {columns.map(([name]) => <HeadCell key={name} scope="col">{name}</HeadCell>)}
                                    </tr>
                                </thead>
                                <tbody>
                                    {rows.map((row, i) => <SheetRow key={i} row={row} />)}
                                </tbody>
                            </Sheet>
                            <Pointer width="92" height="56" viewBox="0 0 92 56">
                                <path d="M0 0l3 1 76 41 2-4 10 16-18-1 2-4z" fill="#fc3a38" />
                            </Pointer>
                        </GridPane>
                        <ScrollBar>
                            <svg width="5" height="8"><path d="M5 0v8L0 4z" fill="#666" /></svg>
                            <Thumb />
                            <svg width="5" height="8"><path d="M0 0v8l5-4z" fill="#666" /></svg>
                        </ScrollBar>
                        <Detail>
                            <DetailTabs>
                                {detailTabs.map(tab => <DetailTab key={tab} $active={tab === '工程量明细'}>{tab}</DetailTab>)}
                            </DetailTabs>
                            <Split>
                                <Formula>
                                    <SmallTable $width={633}>
                                        <colgroup>
                                            <col width="78" /><col width="391" /><col width="46" /><col width="59" /><col width="59" />
                                        </colgroup>
                                        <thead>
                                            <tr><th>内容说明</th><th>计算式</th><th>结果</th><th>累加标识</th><th>引用代码</th></tr>
                                        </thead>
                                    </SmallTable>
                                    <Note>说明：在计算式中，如需要注释请填写在<Code>{' { } '}</Code>内.</Note>
                                </Formula>
                                <Variables>
                                    <SmallTable $width={419}>
                                        <colgroup>
                                            <col width="22" /><col width="76" /><col width="113" /><col width="47" /><col width="101" /><col width="60" />
                                        </colgroup>
                                        <thead>
                                            <tr><th /><VarHead>变量名</VarHead><th>变量说明</th><th>单位</th><th>计算公式</th><th>变量值</th></tr>
                                        </thead>
                                        <tbody>
                                            <tr>
                                                <VarHead $row scope="row">1</VarHead>
                                                <VarCell $focus $align="center"><Code>JZMJ</Code></VarCell>
                                                <VarCell>建筑面积</VarCell>
                                                <VarCell><Code>m2</Code></VarCell>
                                                <VarCell><Digits>0</Digits></VarCell>
                                                <VarCell $align="right"><Digits>0</Digits></VarCell>
                                            </tr>
                                        </tbody>
                                    </SmallTable>
                                </Variables>
                            </Split>
                        </Detail>
                    </Main>
                </Body>
                <Status>
                    <StatusItem>计税方式：增值税(一般计税法)</StatusItem>
                    <StatusItem>工程量清单项目计量规范(2013-河南)</StatusItem>
                    <StatusItem>河南省房屋建筑与装饰工程预算定额(2016)</StatusItem>
                    <StatusItem>建筑工程</StatusItem>
                    <StatusItem>小罗</StatusItem>
                    <Score>0分</Score>
                    <View>
                        <Layouts>
                            <ViewButton $active aria-label="上下布局">
                                <svg width="12" height="12"><path d="M1 0h10l1 1v5l-1 1H1L0 6V1zM1 8h10l1 1v2l-1 1H1l-1-1V9z" fill={BLUE} /></svg>
                            </ViewButton>
                            <ViewButton aria-label="左右布局">
                                <svg width="12" height="12"><path d="M1 0h5l1 1v10l-1 1H1l-1-1V1zM9 0h2l1 1v10l-1 1H9l-1-1V1z" fill="#8c8c8c" /></svg>
                            </ViewButton>
                        </Layouts>
                        100%
                        <IconButton aria-label="缩小"><svg width="12" height="12"><path d="M0 6h12" stroke="#555" strokeWidth="2" /></svg></IconButton>
                        <Zoom type="range" min="0" max="100" defaultValue="34" aria-label="缩放" />
                        <IconButton aria-label="放大"><svg width="12" height="12"><path d="M0 6h12M6 0v12" stroke="#555" strokeWidth="2" /></svg></IconButton>
                    </View>
                </Status>
            </Window>
        </Desktop>
    );
};

export default App;
